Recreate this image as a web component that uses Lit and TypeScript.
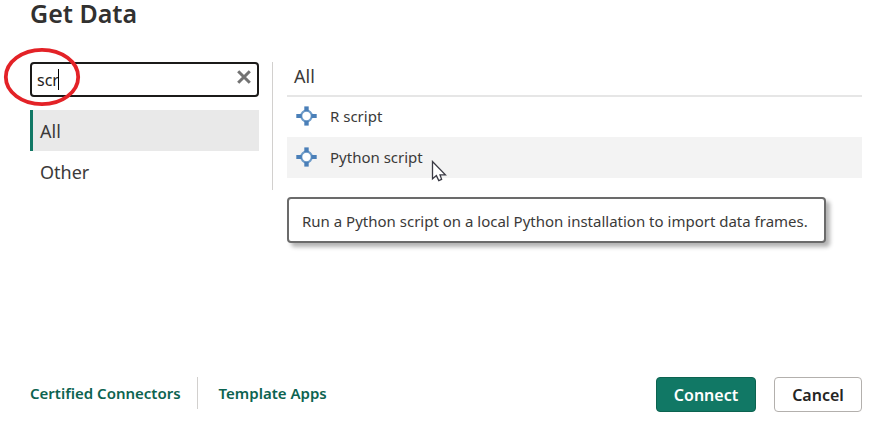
import { LitElement, html, css } from "lit";
import { customElement, property, state } from "lit/decorators.js";
import { classMap } from "lit/directives/class-map.js";

@customElement("connector-icon")
class ConnectorIcon extends LitElement {
  static styles = css`
    :host { display: block; width: 21px; height: 20px; flex: none; }
    svg { display: block; }
  `;
  render() {
    return html`<svg width="21" height="20" viewBox="0 0 21 20" aria-hidden="true">
      <circle cx="10.5" cy="10" r="5.3" fill="#fff" stroke="#6d9bc8" stroke-width="2.2" />
      <g fill="#4a7fb8">
        <rect x="8.3" y="0.4" width="4.4" height="4.8" />
        <rect x="8.3" y="14.8" width="4.4" height="4.8" />
        <rect x="0.3" y="8" width="5.4" height="4" />
        <rect x="15.3" y="8" width="5.4" height="4" />
      </g>
    </svg>`;
  }
}

@customElement("app-root")
class AppRoot extends LitElement {
  @property() query = "scr";
  @state() private category = "All";

  private categories = ["All", "Other"];
  private connectors = ["R script", "Python script"];
  private hovered = "Python script";

  static styles = css`
    :host {
      display: block;
      font-family: "Noto Sans", "Open Sans", sans-serif;
      color: #3b3a39;
      background: #fff;
    }
    * { box-sizing: border-box; }
    button, input { font-family: inherit; }
    .dialog {
      display: flex;
      flex-direction: column;
      min-height: 100vh;
      padding: 0 15px 12px 30px;
    }
    h1 {
      margin: 0;
      height: 62px;
      font-size: 25px;
      line-height: 26px;
      font-weight: 600;
      color: #323130;
    }
    .body { display: flex; }
    .side {
      flex: none;
      width: 243px;
      height: 128px;
      padding-right: 13px;
      border-right: 1px solid #d2d0ce;
    }
    .search { position: relative; height: 35px; margin-bottom: 13px; }
    .search input {
      width: 100%;
      height: 35px;
      padding: 0 32px 0 5px;
      border: 2px solid #1b1a19;
      border-radius: 4px;
      outline: none;
      font-size: 16px;
      color: #252423;
      background: #fff;
    }
    .caret {
      position: absolute;
      left: 28px;
      top: 7px;
      width: 1px;
      height: 21px;
      background: #000;
    }
    .clear {
      position: absolute;
      right: 6px;
      top: 6px;
      width: 18px;
      height: 18px;
      padding: 0;
      border: 0;
      background: none;
    }
    .clear svg { display: block; }
    .ring {
      position: absolute;
      left: -27px;
      top: -15px;
      pointer-events: none;
    }
    .category {
      display: block;
      width: 100%;
      height: 41px;
      padding: 0 0 0 7px;
      border: 0;
      border-left: 3px solid transparent;
      background: none;
      text-align: left;
      font-size: 18px;
      color: #3b3a39;
    }
    .category.selected { background: #e9e9e9; border-left-color: #117865; }
    .results { position: relative; flex: 1; min-width: 0; margin-left: 14px; }
    h2 {
      margin: 0;
      height: 35px;
      padding-left: 7px;
      border-bottom: 2px solid #e6e6e6;
      font-size: 18px;
      line-height: 28px;
      font-weight: 400;
    }
    ul { margin: 0; padding: 0; list-style: none; }
    .row {
      display: flex;
      align-items: center;
      gap: 13px;
      width: 100%;
      height: 41px;
      padding: 0 9px 2px;
      border: 0;
      background: none;
      font-size: 15px;
      color: #3b3a39;
    }
    li:first-child .row { height: 40px; }
    .row.hovered { background: #f3f3f3; }
    .tip {
      position: absolute;
      left: 0;
      top: 135px;
      height: 46px;
      padding: 0 16px 0 13px;
      border: 2px solid #6b6b6b;
      border-radius: 4px;
      background: #fff;
      box-shadow: 4px 4px 4px rgba(0, 0, 0, 0.3);
      font-size: 15px;
      line-height: 44px;
      white-space: nowrap;
    }
    .pointer { position: absolute; left: 144px; top: 98px; pointer-events: none; }
    footer { display: flex; align-items: center; margin-top: auto; }
    .links { display: flex; align-items: center; padding-bottom: 3px; }
    a {
      color: #0c6350;
      font-size: 15px;
      line-height: 32px;
      font-weight: 600;
      text-decoration: none;
    }
    .first { padding-right: 16px; }
    .second { padding-left: 21px; border-left: 1px solid #d2d0ce; }
    .actions { display: flex; gap: 18px; margin-left: auto; }
    .action {
      height: 35px;
      border-radius: 4px;
      padding: 0;
      font-size: 16px;
      font-weight: 600;
    }
    .connect { width: 100px; border: 1px solid #0c6350; background: #117865; color: #fff; }
    .cancel { width: 88px; border: 1px solid #b3b0ad; background: #fff; color: #252423; }
  `;

  render() {
    return html`
      <div class="dialog">
        <h1>Get Data</h1>
        <div class="body">
          <div class="side">
            <div class="search">
              <input type="text" aria-label="Search" .value=${this.query} />
              <span class="caret"></span>
              <button class="clear" aria-label="Clear search">
                <svg width="18" height="18" viewBox="0 0 18 18">
                  <path d="M3.2 3.2L14.8 14.8M14.8 3.2L3.2 14.8" stroke="#737373" stroke-width="3" />
                </svg>
              </button>
              <svg class="ring" width="78" height="62" viewBox="0 0 78 62" aria-hidden="true">
                <ellipse cx="39" cy="30" rx="36.2" ry="27.2" fill="none" stroke="#e32227" stroke-width="3.8" />
              </svg>
            </div>
            <nav>
              ${this.categories.map(
                (c) => html`<button
                  class=${classMap({ category: true, selected: c === this.category })}
                  @click=${() => (this.category = c)}
                >${c}</button>`
              )}
            </nav>
          </div>
          <section class="results">
            <h2>All</h2>
            <ul>
              ${this.connectors.map(
                (c) => html`<li>
                  <button class=${classMap({ row: true, hovered: c === this.hovered })}>
                    <connector-icon></connector-icon>${c}
                  </button>
                </li>`
              )}
            </ul>
            <div class="tip" role="tooltip">Run a Python script on a local Python installation to import data frames.</div>
            <svg class="pointer" width="16" height="22" viewBox="0 0 16 22" aria-hidden="true">
              <path d="M1.5 1.5V18.8L5.4 15.6L7.8 20.6L10.6 19.4L9 14.8H14.4Z" fill="#fff" stroke="#3a3a44" stroke-width="1.3" />
            </svg>
          </section>
        </div>
        <footer>
          <div class="links">
            <a class="first" href="#certified">Certified Connectors</a>
            <a class="second" href="#templates">Template Apps</a>
          </div>
          <div class="actions">
            <button class="action connect">Connect</button>
            <button class="action cancel">Cancel</button>
          </div>
        </footer>
      </div>
    `;
  }
}
